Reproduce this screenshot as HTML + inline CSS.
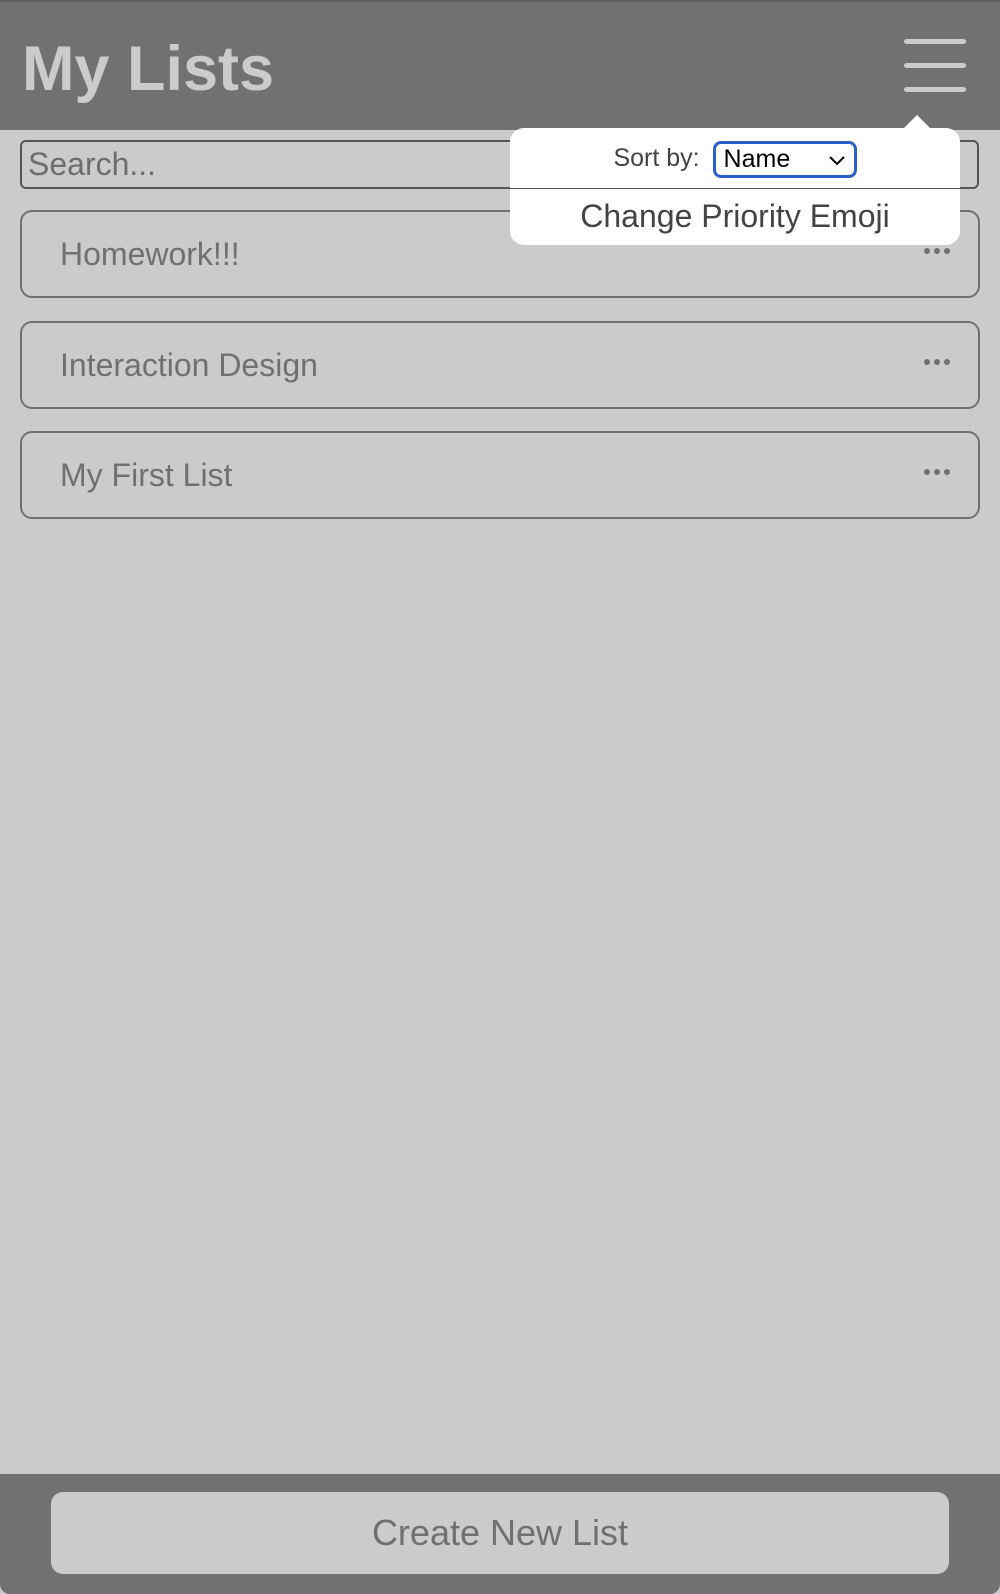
<!DOCTYPE html>
<html><head><style>
*{box-sizing:border-box;margin:0;padding:0}
body{width:1000px;height:1594px;background:#cbcbcb;font-family:"Liberation Sans",sans-serif;position:relative;overflow:hidden}
.hdr{position:absolute;left:0;top:0;width:1000px;height:130px;background:#717171;border-top:2px solid #5f5f5f}
.title{position:absolute;left:22px;top:31px;font-size:63px;font-weight:bold;color:#cbcbcb}
.bar{position:absolute;left:904px;width:62px;height:5px;border-radius:3px;background:#cbcbcb}
.search{position:absolute;left:20px;top:140px;width:959px;height:49px;border:2px solid #555;border-radius:6px;font-size:32px;color:#6d6d6d;padding:4px 6px}
.item{position:absolute;left:20px;width:960px;height:88px;border:2.5px solid #707070;border-radius:12px;font-size:32px;color:#707070;padding:24px 0 0 38px}
.dots{position:absolute;right:28px;top:36px;display:flex;gap:4px}
.dots i{width:6px;height:6px;border-radius:50%;background:#707070;display:block}
.pop{position:absolute;left:510px;top:128px;width:450px;height:117px;background:#fff;border-radius:14px}
.arrow{position:absolute;left:903px;top:115px;width:0;height:0;border-left:14px solid transparent;border-right:14px solid transparent;border-bottom:14px solid #fff}
.sort{position:absolute;left:0;width:100%;top:13px;text-align:center;font-size:25px;color:#444}
.sel{display:inline-block;vertical-align:middle;width:144px;height:37px;border:3px solid #2a5fc8;border-radius:8px;text-align:left;color:#000;font-size:25px;padding:1px 8px;position:relative;margin-left:6px}
.line{position:absolute;left:0;right:0;top:60px;height:1px;background:#555}
.emo{position:absolute;left:0;width:100%;top:70px;text-align:center;font-size:32px;color:#444}
.ftr{position:absolute;left:0;top:1474px;width:1000px;height:120px;background:#717171;border-radius:0 0 10px 10px}
.btn{position:absolute;left:51px;top:18px;width:898px;height:82px;background:#cbcbcb;border-radius:12px;text-align:center;font-size:36px;color:#707070;line-height:82px}
</style></head><body>
<div class="hdr"><div class="title">My Lists</div>
<div class="bar" style="top:37px"></div><div class="bar" style="top:61px"></div><div class="bar" style="top:85px"></div></div>
<div class="search">Search...</div>
<div class="item" style="top:210px">Homework!!!<div class="dots"><i></i><i></i><i></i></div></div>
<div class="item" style="top:321px">Interaction Design<div class="dots"><i></i><i></i><i></i></div></div>
<div class="item" style="top:431px">My First List<div class="dots"><i></i><i></i><i></i></div></div>
<div class="arrow"></div>
<div class="pop">
<div class="sort">Sort by: <span class="sel">Name<svg style="position:absolute;right:8px;top:11px" width="18" height="11" viewBox="0 0 18 11"><path d="M2 2 L9 9 L16 2" fill="none" stroke="#000" stroke-width="2"/></svg></span></div>
<div class="line"></div>
<div class="emo">Change Priority Emoji</div>
</div>
<div class="ftr"><div class="btn">Create New List</div></div>
</body></html>
